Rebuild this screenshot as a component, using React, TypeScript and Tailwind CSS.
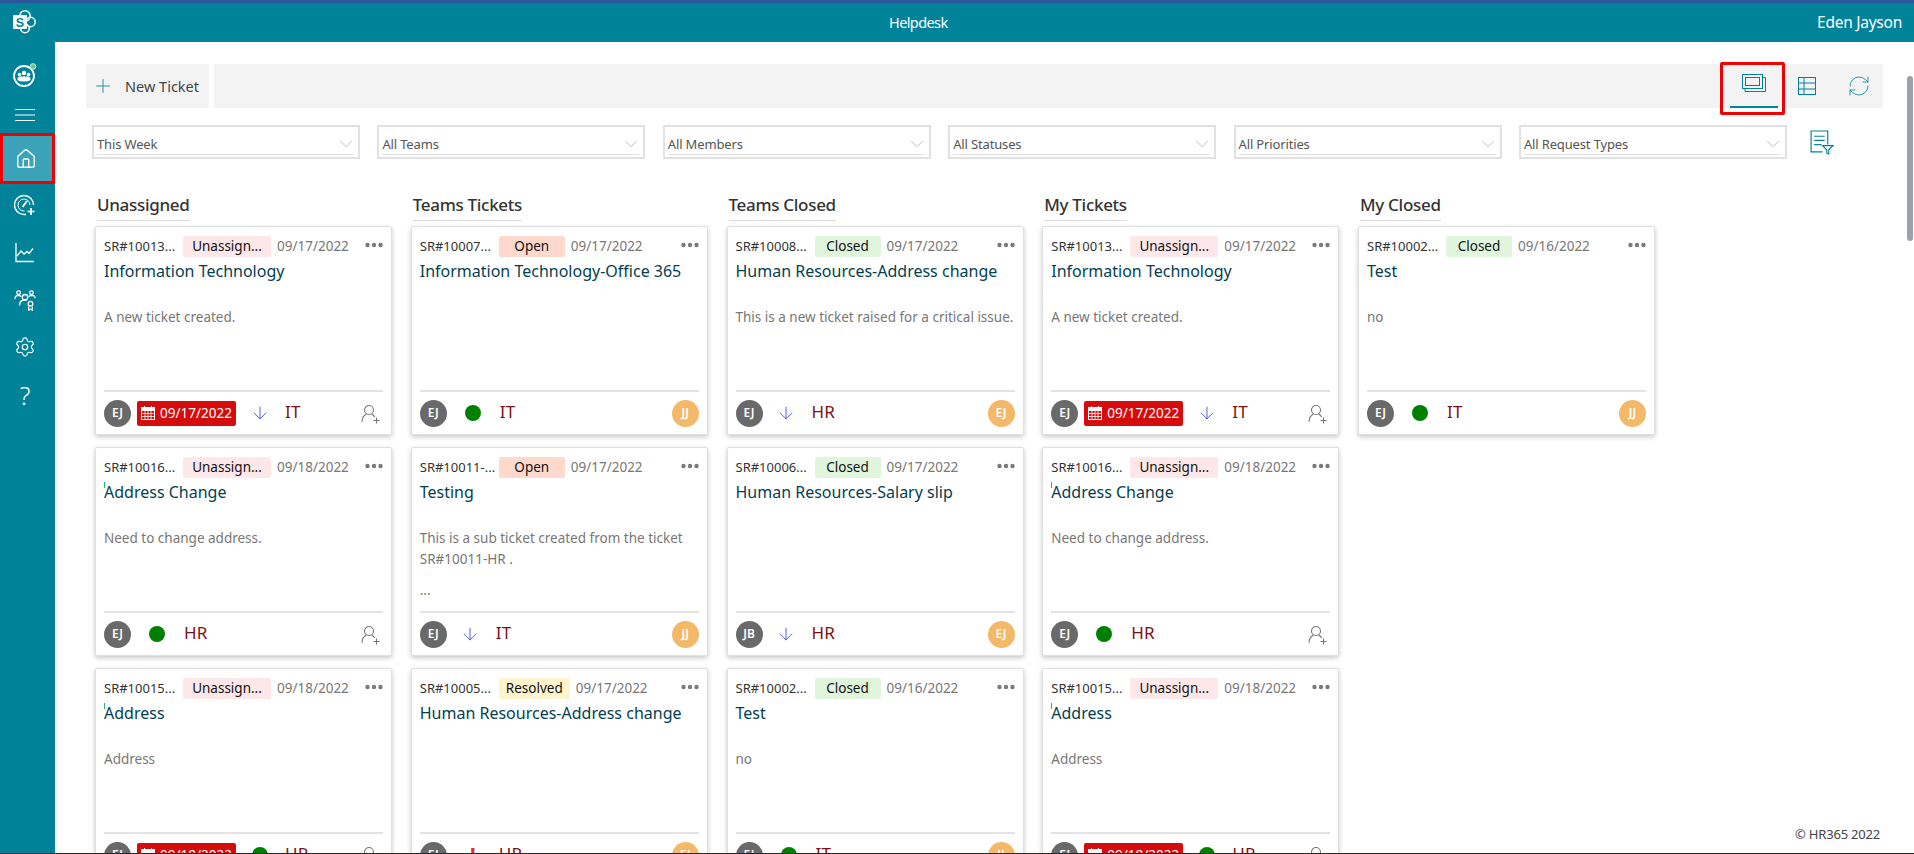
import React from "react";
import { House, Settings, Plus, ChevronDown, RefreshCw, ArrowDown } from "lucide-react";

type T = { sr: string; st: string; date: string; title: string; desc?: string[]; who?: string; due?: string; pri: "down" | "dot" | "bang"; team: string; owner?: string; mark?: boolean };

const STAT: Record<string, string> = {
  "Unassign...": "w-[88px] bg-[#fde7e9]",
  Open: "w-[66px] bg-[#fed9cc]",
  Closed: "w-[66px] bg-[#dff6dd]",
  Resolved: "w-[71px] bg-[#fff4ce]",
};

const it: T = { sr: "SR#10013...", st: "Unassign...", date: "09/17/2022", title: "Information Technology", desc: ["A new ticket created."], due: "09/17/2022", pri: "down", team: "IT" };
const ac: T = { sr: "SR#10016...", st: "Unassign...", date: "09/18/2022", title: "Address Change", desc: ["Need to change address."], pri: "dot", team: "HR", mark: true };
const ad: T = { sr: "SR#10015...", st: "Unassign...", date: "09/18/2022", title: "Address", desc: ["Address"], due: "09/18/2022", pri: "dot", team: "HR", mark: true };
const test: T = { sr: "SR#10002...", st: "Closed", date: "09/16/2022", title: "Test", desc: ["no"], pri: "dot", team: "IT", owner: "JJ" };

const COLS: { name: string; items: T[] }[] = [
  { name: "Unassigned", items: [it, ac, ad] },
  {
    name: "Teams Tickets",
    items: [
      { sr: "SR#10007...", st: "Open", date: "09/17/2022", title: "Information Technology-Office 365", pri: "dot", team: "IT", owner: "JJ" },
      { sr: "SR#10011-...", st: "Open", date: "09/17/2022", title: "Testing", desc: ["This is a sub ticket created from the ticket", "SR#10011-HR .", "", "..."], pri: "down", team: "IT", owner: "JJ" },
      { sr: "SR#10005...", st: "Resolved", date: "09/17/2022", title: "Human Resources-Address change", pri: "bang", team: "HR", owner: "EJ" },
    ],
  },
  {
    name: "Teams Closed",
    items: [
      { sr: "SR#10008...", st: "Closed", date: "09/17/2022", title: "Human Resources-Address change", desc: ["This is a new ticket raised for a critical issue."], pri: "down", team: "HR", owner: "EJ" },
      { sr: "SR#10006...", st: "Closed", date: "09/17/2022", title: "Human Resources-Salary slip", who: "JB", pri: "down", team: "HR", owner: "EJ" },
      test,
    ],
  },
  { name: "My Tickets", items: [it, ac, ad] },
  { name: "My Closed", items: [test] },
];

function Dots() {
  return (
    <svg viewBox="0 0 18 6" className="ml-auto mt-[-3px] h-[6px] w-[18px] shrink-0" fill="#7a7a7a">
      <circle cx="2.500" cy="3" r="2.200" /><circle cx="9" cy="3" r="2.200" /><circle cx="15.500" cy="3" r="2.200" />
    </svg>
  );
}

function Cal() {
  return (
    <svg viewBox="0 0 14 14" className="h-[14px] w-[14px] shrink-0" fill="none" stroke="#fff" strokeWidth="1">
      <rect x=".5" y="1.500" width="13" height="12" />
      <path d="M3.500 0v3M10.500 0v3" />
      <path d="M.5 2h13v2.500H.5z" fill="#fff" />
      <path d="M4 5v8M7 5v8M10 5v8M1 7.500h12M1 10.500h12" strokeWidth=".8" />
    </svg>
  );
}

function AddUser() {
  return (
    <svg viewBox="0 0 20 20" className="ml-auto mr-[2px] mt-[2px] h-[20px] w-[20px] shrink-0" fill="none" stroke="#777" strokeWidth="1.100">
      <circle cx="8" cy="6" r="4.500" />
      <path d="M1 18c0-4 2.500-7 4.500-8M10.500 10c1.500.7 2.500 1.700 3.200 3" />
      <path d="M15.500 13.500v6M12.500 16.500h6" />
    </svg>
  );
}

function Card({ t }: { t: T }) {
  return (
    <div className="relative flex h-[209px] w-[297px] shrink-0 flex-col rounded-[2px] border border-[#e0e0e0] bg-white px-[8px] pt-[9px] shadow-[0_2px_5px_rgba(0,0,0,0.22)]">
      <div className="flex h-[21px] items-center">
        <span className="w-[73px] shrink-0 whitespace-nowrap text-[13px] text-[#333]">{t.sr}</span>
        <span className={`ml-[6px] flex h-[21px] shrink-0 items-center justify-center rounded-[2px] text-[13.5px] text-[#111] ${STAT[t.st]}`}>{t.st}</span>
        <span className="ml-[6px] whitespace-nowrap text-[13.5px] text-[#797775]">{t.date}</span>
        <Dots />
      </div>
      <div className="relative mt-[2px] h-[24px] whitespace-nowrap text-[16px] leading-[24px] text-[#043f4f]">
        {t.mark && <span className="absolute left-0 top-[2px] h-[6px] w-px bg-[#1fb88a]" />}
        {t.title}
      </div>
      <div className="mt-[24px] flex-1 text-[13.5px] leading-[21px] text-[#797775]">
        {(t.desc ?? []).map((l, i) => (
          <div key={i} className={l === "" ? "h-[10px]" : "whitespace-nowrap"}>{l}</div>
        ))}
      </div>
      <div className="flex h-[44px] shrink-0 items-center border-t-2 border-[#e3e3e3]">
        <span className="flex h-[27px] w-[27px] shrink-0 items-center justify-center rounded-full bg-[#696969] text-[12px] font-semibold text-white">{t.who ?? "EJ"}</span>
        {t.due && (
          <span className="ml-[6px] flex h-[25px] w-[99px] shrink-0 items-center justify-center gap-[5px] rounded-[2px] bg-[#d40c0c] text-[13.5px] text-white">
            <Cal />
            {t.due}
          </span>
        )}
        <span className={`flex w-[24px] shrink-0 items-center justify-center ${t.due ? "ml-[12px]" : t.pri === "down" ? "ml-[11px]" : "ml-[14px]"}`}>
          {t.pri === "down" && <ArrowDown className="h-[20px] w-[20px] text-[#3a3af0]" strokeWidth={1} />}
          {t.pri === "dot" && <span className="h-[16px] w-[16px] rounded-full bg-[#008000]" />}
          {t.pri === "bang" && <span className="text-[20px] font-bold leading-none text-[#d13438]">!</span>}
        </span>
        <span className={`${t.due ? "ml-[13px]" : t.pri === "dot" ? "ml-[15px]" : "ml-[14px]"} mt-[-3px] text-[17px] tracking-[0.2px] text-[#800f0f]`}>{t.team}</span>
        {t.owner ? (
          <span className="ml-auto flex h-[27px] w-[27px] shrink-0 items-center justify-center rounded-full bg-[#f3b868] text-[12px] font-semibold text-white">{t.owner}</span>
        ) : (
          <AddUser />
        )}
      </div>
    </div>
  );
}

function SideIcon({ children, h }: { children: React.ReactNode; h: string }) {
  return <div className={`flex w-[50px] items-center justify-center ${h}`}>{children}</div>;
}

const FILTERS = ["This Week", "All Teams", "All Members", "All Statuses", "All Priorities", "All Request Types"];

export default function App() {
  const font = { fontFamily: '"Noto Sans", "Open Sans", sans-serif' };
  return (
    <div style={font} className="relative flex h-[854px] w-[1914px] flex-col overflow-hidden bg-white">
      <div className="h-[3px] shrink-0 bg-[#2b579a]" />
      <header className="flex h-[39px] shrink-0 items-center bg-[#008299] text-white">
        <svg viewBox="0 0 24 24" className="ml-[13px] mt-[-2px] h-[24px] w-[24px]">
          <circle cx="12" cy="6" r="5.200" fill="none" stroke="#fff" strokeWidth="1.500" />
          <circle cx="17.500" cy="12" r="4.700" fill="none" stroke="#fff" strokeWidth="1.500" />
          <circle cx="12" cy="18.500" r="4.300" fill="none" stroke="#fff" strokeWidth="1.500" />
          <rect x="0" y="5" width="14" height="14" rx="1" fill="#fff" />
          <text x="7" y="16.500" textAnchor="middle" fontSize="12.500" fontWeight="700" fill="#008299" fontFamily="Liberation Sans">S</text>
        </svg>
        <div className="ml-[852px] text-[14.5px] tracking-[-0.6px]">Helpdesk</div>
        <div className="ml-auto mr-[12px] text-[15.5px] tracking-[-0.25px]">Eden Jayson</div>
      </header>
      <div className="flex min-h-0 flex-1">
        <aside className="flex w-[55px] shrink-0 flex-col bg-[#008299] pt-[13px] text-white">
          <SideIcon h="h-[40px]">
            <svg viewBox="0 0 26 26" className="h-[26px] w-[26px]">
              <circle cx="12" cy="14" r="10" fill="none" stroke="#fff" strokeWidth="1.800" />
              <circle cx="7.500" cy="12.500" r="1.800" fill="#fff" /><circle cx="16.500" cy="12.500" r="1.800" fill="#fff" /><circle cx="12" cy="11" r="2.200" fill="#fff" />
              <path d="M5.500 18c0-2.500 1-3.500 2-3.500h9c1 0 2 1 2 3.500-1.800 1-3.800 1.500-6.500 1.500S7.300 19 5.500 18z" fill="#fff" />
              <circle cx="21" cy="4.500" r="2.800" fill="#5fc98a" stroke="#d5f0dd" strokeWidth="1" />
            </svg>
          </SideIcon>
          <SideIcon h="h-[38px] pt-[2px]">
            <svg viewBox="0 0 20 12" className="h-[12px] w-[20px]" stroke="#fff" strokeWidth="1">
              <path d="M0 .5h20M0 6h20M0 11.500h20" />
            </svg>
          </SideIcon>
          <div className="flex h-[51px] w-[55px] items-center justify-center border-[3px] border-[#f00000] bg-[#3ba3b8]">
            <House className="ml-[-3px] h-[22px] w-[22px]" strokeWidth={1.5} />
          </div>
          <SideIcon h="h-[42px]">
            <svg viewBox="0 0 22 22" className="h-[22px] w-[22px]" fill="none" stroke="#fff" strokeWidth="1.400">
              <path d="M12 20.500H10A9.500 9.500 0 1 1 19.500 11" />
              <path d="M10.500 17A6 6 0 1 1 16 11" strokeWidth="1" />
              <path d="M8.500 13l4.500-6" strokeWidth="1.800" />
              <path d="M17 14v7M13.500 17.500h7" strokeWidth="1.700" />
            </svg>
          </SideIcon>
          <SideIcon h="h-[54px]">
            <svg viewBox="0 0 20 20" className="h-[20px] w-[20px]" fill="none" stroke="#fff" strokeWidth="1.300">
              <path d="M1 0v18.500h18" />
              <path d="M2 13l4-5 3 3 3-2.500 2 2 4-5" />
            </svg>
          </SideIcon>
          <SideIcon h="h-[40px]">
            <svg viewBox="0 0 24 24" className="h-[22px] w-[22px]" fill="none" stroke="#fff" strokeWidth="1.400">
              <circle cx="5" cy="4" r="2" /><circle cx="12" cy="9" r="3" /><circle cx="19" cy="4" r="2" /><circle cx="18" cy="16" r="2.500" />
              <path d="M1 11c0-3 2-4 4-4l3 1M23 10c0-2-2-3-4-3l-3 1M6 18c0-4 2-6 6-6h2M16 19v4l2-1 2 1v-4" />
            </svg>
          </SideIcon>
          <SideIcon h="h-[54px]"><Settings className="h-[22px] w-[22px]" strokeWidth={1.3} /></SideIcon>
          <SideIcon h="h-[42px]"><span className="text-[25px] font-light leading-none">?</span></SideIcon>
        </aside>
        <main className="min-w-0 flex-1 pl-[31px] pr-[31px] pt-[22px]">
          <div className="flex h-[44px] gap-[5px]">
            <div className="flex w-[123px] items-center bg-[#f3f3f3] pl-[6px] text-[14.5px] text-[#444]">
              <Plus className="h-[22px] w-[22px] text-[#008299]" strokeWidth={0.9} />
              <span className="ml-[11px] mt-[1px] whitespace-nowrap">New Ticket</span>
            </div>
            <div className="relative flex flex-1 items-center justify-end bg-[#f3f3f3] pr-[12px] text-[#008299]">
              <svg viewBox="0 0 24 18" className="mt-[-7px] h-[18px] w-[24px]" fill="none" stroke="#008299" strokeWidth="1">
                <rect x=".5" y=".5" width="20" height="14" />
                <rect x="3.500" y="3.500" width="14" height="8" />
                <path d="M21 3.500h2.500v14H3v-3" />
              </svg>
              <svg viewBox="0 0 18 18" className="ml-[32px] h-[18px] w-[18px]" fill="none" stroke="#008299" strokeWidth="1">
                <rect x=".5" y=".5" width="17" height="17" /><path d="M.5 6h17M.5 12h17M6 .5v17" />
              </svg>
              <RefreshCw className="ml-[31px] h-[24px] w-[24px]" strokeWidth={0.8} />
              <div className="absolute right-[98px] top-[-2px] h-[53px] w-[65px] rounded-[2px] border-[3px] border-[#f00000]" />
              <div className="absolute right-[105px] top-[42px] h-[2px] w-[48px] bg-[#008299]" />
            </div>
          </div>
          <div className="ml-[6px] mt-[17px] flex gap-[17.4px]">
            {FILTERS.map((f) => (
              <div key={f} className="flex h-[34px] w-[268px] shrink-0 flex-col border-2 border-[#e1e1e1] pl-[3px] pr-[4px]">
                <div className="flex h-[28px] items-end justify-between border-b border-[#e1e1e1] text-[13px] leading-[19px] tracking-[-0.15px] text-[#555]">
                  <span>{f}</span>
                  <ChevronDown className="mb-[-1px] mr-[-3px] h-[22px] w-[22px] text-[#b8b8b8]" strokeWidth={1} />
                </div>
              </div>
            ))}
            <svg viewBox="0 0 24 24" className="ml-[5px] mt-[5px] h-[25px] w-[25px]" fill="none" stroke="#008299" strokeWidth="1.100">
              <path d="M18 14V1H2v20h11" />
              <path d="M5 6h10M5 10h10M5 14h7" />
              <path d="M13 15h10l-4 4v4l-2-1v-3z" />
            </svg>
          </div>
          <div className="mt-[34px] flex gap-[18.75px] pl-[9px]">
            {COLS.map((c, i) => (
              <div key={i} className="w-[297px] shrink-0">
                <div className="ml-[2px] inline-block h-[27px] border-b border-[#dcdcdc] text-[17px] font-medium leading-[22px] tracking-[-0.3px] text-[#333]">{c.name}</div>
                <div className="mt-[5px] flex flex-col gap-[12px]">
                  {c.items.map((t, k) => (
                    <Card key={k} t={t} />
                  ))}
                </div>
              </div>
            ))}
          </div>
        </main>
      </div>
      <div className="absolute bottom-[10px] right-[34px] bg-white text-[13px] tracking-[-0.2px] text-[#444]">© HR365 2022</div>
      <div className="absolute right-[1px] top-[76px] h-[165px] w-[6px] rounded-[3px] bg-[#9aa3aa]" />
      <div className="absolute bottom-0 left-0 h-px w-full bg-[#1f2a33]" />
    </div>
  );
}
